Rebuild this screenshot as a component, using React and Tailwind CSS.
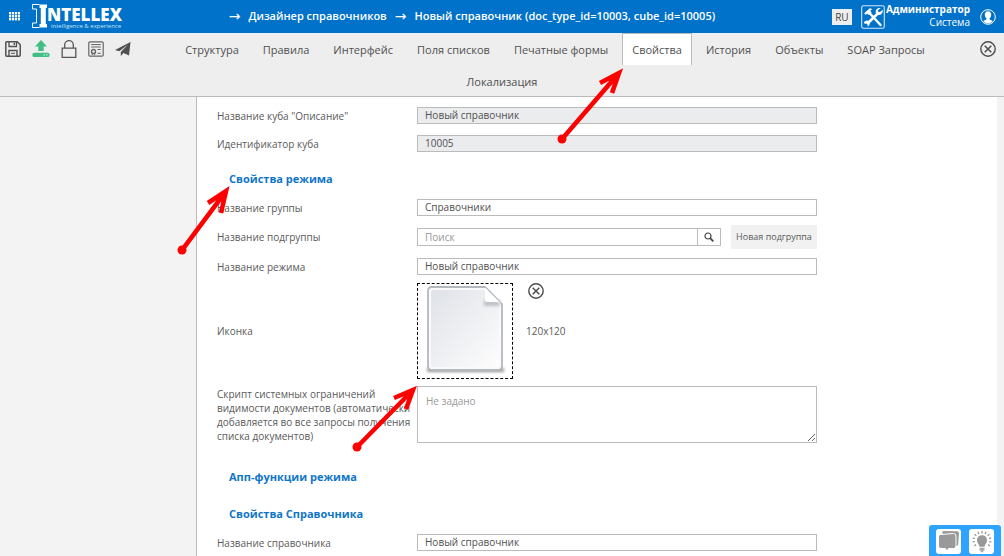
import { useState } from "react";

const TABS = [
  "Структура",
  "Правила",
  "Интерфейс",
  "Поля списков",
  "Печатные формы",
  "Свойства",
  "История",
  "Объекты",
  "SOAP Запросы",
  "Локализация",
];

function CloseIcon() {
  return (
    <svg viewBox="0 0 16 16" className="size-4" fill="none" stroke="#4d4d4d" aria-hidden="true">
      <circle cx="8" cy="8" r="7.2" strokeWidth="1.4" />
      <path d="M4.7 4.7 11.3 11.3M11.3 4.7 4.7 11.3" strokeWidth="1.5" />
    </svg>
  );
}

function SaveIcon() {
  return (
    <svg viewBox="0 0 16 16" className="size-4" fill="none" stroke="#505050" strokeWidth="1.5" aria-hidden="true">
      <path d="M1.8.8h10.4l3 3v10.4a1 1 0 0 1-1 1H1.8a1 1 0 0 1-1-1V1.8a1 1 0 0 1 1-1Z" />
      <path d="M4 1v4.500h7.500V1" strokeWidth="1.3" />
      <path d="M9.300 1.800v2.200" strokeWidth="1.4" />
      <path d="M4 15V9.500h8V15" strokeWidth="1.400" />
      <path d="M6 12.300h4" strokeWidth="1" />
    </svg>
  );
}

function UploadIcon() {
  return (
    <svg viewBox="0 0 18 18" className="size-[18px]" fill="#3fbf84" aria-hidden="true">
      <path d="M9 0 15 6.500h-3.300V11H6.300V6.500H3Z" />
      <path d="M2.500 12.700h13a2.200 2.200 0 0 1 0 4.400h-13a2.200 2.200 0 0 1 0-4.400Z" />
      <path d="M11.600 14.300h1.300v1.200h-1.300zM14.200 14.300h1.300v1.200h-1.300z" fill="#d6f3e5" />
    </svg>
  );
}

function LockIcon() {
  return (
    <svg viewBox="0 0 16 18" className="h-[18px] w-4" fill="none" stroke="#555" strokeWidth="1.3" aria-hidden="true">
      <path d="M1.200 8.200h13.600v9.100H1.200Z" />
      <path d="M3.700 8V5a4.300 4.300 0 0 1 8.600 0v3" />
    </svg>
  );
}

function CertificateIcon() {
  return (
    <svg viewBox="0 0 16 16" className="size-4" fill="none" stroke="#666" strokeWidth="1.2" aria-hidden="true">
      <rect x=".8" y=".8" width="14.4" height="14.4" rx="1.2" />
      <path d="M3.200 3.600h9.600M3.200 6h9.600M9.500 8.500h3.300M9.500 12.300h3.300" strokeWidth="1" />
      <circle cx="5.500" cy="10.500" r="2" strokeWidth="1.400" />
      <path d="M4.300 12v2M6.700 12v2" strokeWidth="1" />
    </svg>
  );
}

function SendIcon() {
  return (
    <svg viewBox="0 0 16 14" className="h-3.5 w-4" fill="#505050" aria-hidden="true">
      <path d="M15.500 0 0 8l4.300 1.300L13 2.500 5.800 10v4l2.700-3 5.500 2.500Z" />
    </svg>
  );
}

function ToolsIcon() {
  return (
    <svg viewBox="0 0 24 24" className="size-6" fill="none" stroke="#fff" aria-hidden="true">
      <rect x=".7" y=".7" width="22.6" height="22.6" rx="1.8" strokeWidth="1.1" stroke="#d5e8f7" />
      <path d="M8.500 8 19.500 20" strokeWidth="2.400" strokeLinecap="round" />
      <path d="M3.200 8.200 8.700 3.200 11.200 4 9.400 5.700l1.200 2-2.500 2.300-2-1.200-1.400 1.300Z" fill="#fff" stroke="none" />
      <path d="M6 19 16.500 8.700" strokeWidth="2.600" />
      <path d="M19.800 3.100a4 4 0 0 0-5 5l1.900 1.700a4 4 0 0 0 4.900-5L19 7.100l-1.800-.4-.3-1.400Z" fill="#fff" stroke="none" />
      <path d="M3 17.300a3 3 0 1 1 4.600 3.600l-1.200.4.600-2-1.300-1.100-2 .8Z" fill="#fff" stroke="none" />
    </svg>
  );
}

function UserIcon() {
  return (
    <svg viewBox="0 0 16 16" className="size-4" aria-hidden="true">
      <circle cx="8" cy="8" r="7.300" fill="none" stroke="#fff" strokeWidth="1" />
      <path
        d="M8 2.200c2 0 3.200 1.300 3.200 3.200 0 1.700-.7 3-1.600 3.900v1.200l3.200 1.500C11.700 13.600 10 14.400 8 14.400s-3.700-.8-4.800-2.400l3.200-1.500V9.300c-.9-.9-1.600-2.200-1.600-3.900C4.800 3.500 6 2.200 8 2.200Z"
        fill="#fff"
      />
    </svg>
  );
}

function GridIcon() {
  return (
    <svg viewBox="0 0 11 9" className="h-[9px] w-[11px]" fill="#fff" aria-hidden="true">
      {[0, 3, 6].map((y) =>
        [0, 3, 6, 9].map((x) => <rect key={`${x}-${y}`} x={x} y={y} width="2.200" height="2.400" />)
      )}
    </svg>
  );
}

function Logo() {
  return (
    <a href="#home" className="flex w-[92px] shrink-0 text-white" aria-label="Intellex">
      <svg viewBox="0 0 15 24" className="h-6 w-[15px] shrink-0" aria-hidden="true">
        <path d="M7.500 .5h7.500v3.500h-1.200v16H15v3.500H7.500V20h1.300V4H7.500Z" fill="#fff" />
        <path d="M7.500 .5H.5V5H4.500v14H.5v4.500h7" fill="none" stroke="#fff" strokeWidth="1" />
      </svg>
      <span className="flex flex-col pt-1">
        <span className="text-[17px] leading-[14px] font-extrabold">NTELLEX</span>
        <span className="pl-1 text-[6px] leading-[8px] whitespace-nowrap text-[#cfe4f5]">intelligence &amp; experience</span>
      </span>
    </a>
  );
}

function FileIcon() {
  return (
    <svg viewBox="0 0 94 94" className="size-full" aria-hidden="true">
      <defs>
        <linearGradient id="paper" x1="0" y1="0" x2="1" y2="1">
          <stop offset="0" stopColor="#dfe2e8" />
          <stop offset="1" stopColor="#fdfdfd" />
        </linearGradient>
        <filter id="soft" x="-10%" y="-50%" width="120%" height="200%">
          <feGaussianBlur stdDeviation="1.5" />
        </filter>
      </defs>
      <path d="M9 84h77v4H9Z" fill="#999" filter="url(#soft)" />
      <path d="M14 3h53l17 17v62q0 4-4 4H14q-4 0-4-4V7q0-4 4-4Z" fill="#fafafb" stroke="#b3b8bf" strokeWidth="1.8" />
      <path d="M15 6h51l15 16v59q0 2-2 2H15q-2 0-2-2V8q0-2 2-2Z" fill="url(#paper)" />
      <path d="M66 16h16v6H66Z" fill="#bfc2c6" filter="url(#soft)" />
      <path d="M67 3.500 83.500 20q-2-2-6-2H69q-2 0-2-2Z" fill="#fff" />
    </svg>
  );
}

function ChatIcon() {
  return (
    <svg viewBox="0 0 25 25" className="size-[25px]" aria-hidden="true">
      <path d="M6 4q0-2 2-2l13 .3q2 0 2 2L22.200 15q0 2-2 2Z" fill="#999" />
      <path d="M4.500 5.500 17.500 4.500q2.500 0 2.500 2.500V17q0 2.500-2.500 2.500h-5L11 22.500 9.500 19.500H5Q2.500 19.500 2.500 17V8q0-2.500 2-2.500Z" fill="#999" stroke="#fff" strokeWidth="1" />
    </svg>
  );
}

function BulbIcon() {
  return (
    <svg viewBox="0 0 25 25" className="size-[25px]" fill="#999" aria-hidden="true">
      <path d="M13 6.200c3 0 5 2.200 5 5 0 3-2.200 3.800-2.500 6.600h-5C10.200 15 8 14.200 8 11.200c0-2.800 2-5 5-5Z" />
      <path d="M10.500 18.700h5v2.800h-1.200v1.800h-2.600v-1.800h-1.200Z" fill="#aaa" />
      <path
        d="M13 2v2.500M9 2.800l.9 2.200M17 2.800l-.9 2.200M5.600 5.200l1.700 1.600M20.400 5.200l-1.700 1.600M3.800 8.900l2.100.7M22.200 8.900l-2.100.7M3.600 12.900l2.200-.2M22.400 12.900l-2.200-.2M5.200 17l1.800-1.500M20.800 17 19 15.500"
        stroke="#999"
        strokeWidth="1.3"
      />
    </svg>
  );
}

function Field({ id, label, value, readOnly }) {
  return (
    <div className="grid grid-cols-[200px_minmax(0,400px)] items-center">
      <label htmlFor={id}>{label}</label>
      <input
        id={id}
        type="text"
        defaultValue={value}
        readOnly={readOnly}
        className="h-[17px] w-full border border-[#bbb] bg-white px-[7px] pb-px leading-[14px] text-[#505050] read-only:bg-[#ebecee]"
      />
    </div>
  );
}

function SectionTitle({ children }) {
  return <h2 className="pl-3 text-[11px] leading-[18px] font-bold text-[#0f75c8]">{children}</h2>;
}

function Arrow({ from, tip, left, right }) {
  return (
    <g>
      <circle cx={from[0]} cy={from[1]} r="4.5" fill="#f00" stroke="none" />
      <path d={`M${from} L${tip} M${left} L${tip} L${right}`} />
    </g>
  );
}

export default function App() {
  const [active, setActive] = useState("Свойства");

  return (
    <div className="relative flex min-h-screen flex-col bg-[#f3f3f3] font-['Open_Sans','Noto_Sans',sans-serif] text-[10px] leading-[14px] text-[#5a5a5a]">
      <header className="flex h-[33px] items-center bg-[#0072c9] text-white">
        <button type="button" aria-label="Меню" className="ml-[9px] mr-3 shrink-0">
          <GridIcon />
        </button>
        <Logo />
        <nav aria-label="Навигация" className="flex min-w-0 flex-1 items-center justify-center gap-2 pr-3 pb-[2px] text-[11px] font-semibold whitespace-nowrap">
          <span className="font-['DejaVu_Sans',sans-serif] text-[14px] font-normal">→</span>
          <a href="#designer">Дизайнер справочников</a>
          <span className="font-['DejaVu_Sans',sans-serif] text-[14px] font-normal">→</span>
          <a href="#new">Новый справочник (doc_type_id=10003, cube_id=10005)</a>
        </nav>
        <button type="button" className="mr-[9px] h-4 w-5 bg-[#eee] text-[10px] leading-4 text-[#444]">
          RU
        </button>
        <button type="button" aria-label="Инструменты">
          <ToolsIcon />
        </button>
        <div className="ml-px mr-[10px] pb-[2px] text-right text-[10px] leading-[13px]">
          <div className="font-bold">Администратор</div>
          <div>Система</div>
        </div>
        <button type="button" aria-label="Профиль" className="mr-2">
          <UserIcon />
        </button>
      </header>

      <div className="bg-[#eee] text-center shadow-[inset_0_-1px_0_#bbb]">
        <div className="float-left flex h-8 w-[140px] items-center gap-[11px] pl-[5px]">
          <button type="button" aria-label="Сохранить"><SaveIcon /></button>
          <button type="button" aria-label="Загрузить"><UploadIcon /></button>
          <button type="button" aria-label="Заблокировать"><LockIcon /></button>
          <button type="button" aria-label="Сертификат"><CertificateIcon /></button>
          <button type="button" aria-label="Отправить"><SendIcon /></button>
        </div>
        <div className="float-right flex h-8 w-[34px] items-center pl-[10px]">
          <button type="button" aria-label="Закрыть"><CloseIcon /></button>
        </div>
        <nav aria-label="Разделы">
          {TABS.map((tab) => (
            <button
              key={tab}
              type="button"
              onClick={() => setActive(tab)}
              className={
                tab === active
                  ? "mx-[2px] inline-block h-8 border border-b-0 border-[#bbb] bg-white px-[9px] align-top text-[11px] text-[#505050]"
                  : "mx-[2px] inline-block h-8 border border-b-0 border-transparent px-[9px] align-top text-[11px] text-[#505050]"
              }
            >
              {tab}
            </button>
          ))}
        </nav>
      </div>

      <main className="ml-[196px] mr-[7px] flex-1 border-l border-[#bbb] bg-white pt-[10px] pl-5">
        <div className="flex flex-col gap-[11px]">
          <Field id="cube-name" label={'Название куба "Описание"'} value="Новый справочник" readOnly />
          <Field id="cube-id" label="Идентификатор куба" value="10005" readOnly />
        </div>

        <section className="mt-[18px]">
          <SectionTitle>Свойства режима</SectionTitle>
          <div className="mt-[11px] flex flex-col gap-[9px]">
            <Field id="group" label="Название группы" value="Справочники" />
            <div className="grid grid-cols-[200px_minmax(0,400px)] items-center">
              <label htmlFor="subgroup">Название подгруппы</label>
              <div className="flex items-center">
                <input
                  id="subgroup"
                  type="text"
                  placeholder="Поиск"
                  className="h-[18px] min-w-0 flex-1 border border-[#bbb] bg-white px-[7px] placeholder:text-[#999]"
                />
                <button type="button" aria-label="Найти" className="flex h-[18px] w-[23px] items-center justify-center border border-l-0 border-[#bbb]">
                  <svg viewBox="0 0 10 10" className="size-[10px]" fill="none" stroke="#444" aria-hidden="true">
                    <circle cx="4" cy="4" r="3" strokeWidth="1.2" />
                    <path d="M6.200 6.200 9.300 9.300" strokeWidth="1.8" />
                  </svg>
                </button>
                <button type="button" className="ml-[10px] h-6 w-[86px] bg-[#f1f1f1] text-[9px] whitespace-nowrap">
                  Новая подгруппа
                </button>
              </div>
            </div>
            <Field id="mode" label="Название режима" value="Новый справочник" />
          </div>

          <div className="mt-2 flex flex-col gap-[7px]">
            <div className="grid grid-cols-[200px_minmax(0,400px)] items-center">
              <span>Иконка</span>
              <div className="flex items-center gap-[13px]">
                <div className="size-24 border border-dashed border-black">
                  <FileIcon />
                </div>
                <div className="flex h-24 flex-col gap-[25px]">
                  <button type="button" aria-label="Удалить иконку" className="ml-[2px] size-4"><CloseIcon /></button>
                  <span>120x120</span>
                </div>
              </div>
            </div>
            <div className="grid grid-cols-[200px_minmax(0,400px)] items-center">
              <label htmlFor="script">
                Скрипт системных ограничений видимости документов (автоматически добавляется во все запросы получения списка документов)
              </label>
              <textarea
                id="script"
                placeholder="Не задано"
                className="block h-[57px] w-full border border-[#bbb] bg-white px-2 py-[7px] placeholder:text-[#999]"
              />
            </div>
          </div>
        </section>

        <section className="mt-[25px]">
          <SectionTitle>Апп-функции режима</SectionTitle>
        </section>

        <section className="mt-[19px] flex flex-col gap-[11px]">
          <SectionTitle>Свойства Справочника</SectionTitle>
          <Field id="catalog" label="Название справочника" value="Новый справочник" />
        </section>
      </main>

      <div className="fixed right-[3px] bottom-0 flex gap-2 rounded-t-[3px] bg-[#2ea3ff] px-[7px] pt-1 pb-[2px]">
        <button type="button" aria-label="Чат" className="rounded-[3px] bg-white"><ChatIcon /></button>
        <button type="button" aria-label="Подсказки" className="rounded-[3px] bg-white"><BulbIcon /></button>
      </div>

      <svg
        viewBox="0 0 1004 556"
        className="pointer-events-none absolute top-0 left-0 h-[556px] w-[1004px]"
        fill="none"
        stroke="#f00"
        strokeWidth="4.6"
        aria-hidden="true"
      >
        <Arrow from={[562, 139]} tip={[619, 73]} left={[600, 83]} right={[612, 93]} />
        <Arrow from={[182, 250]} tip={[226, 191]} left={[208, 203]} right={[221, 213]} />
        <Arrow from={[357, 447]} tip={[413, 390]} left={[394, 398]} right={[406, 409]} />
      </svg>
    </div>
  );
}
